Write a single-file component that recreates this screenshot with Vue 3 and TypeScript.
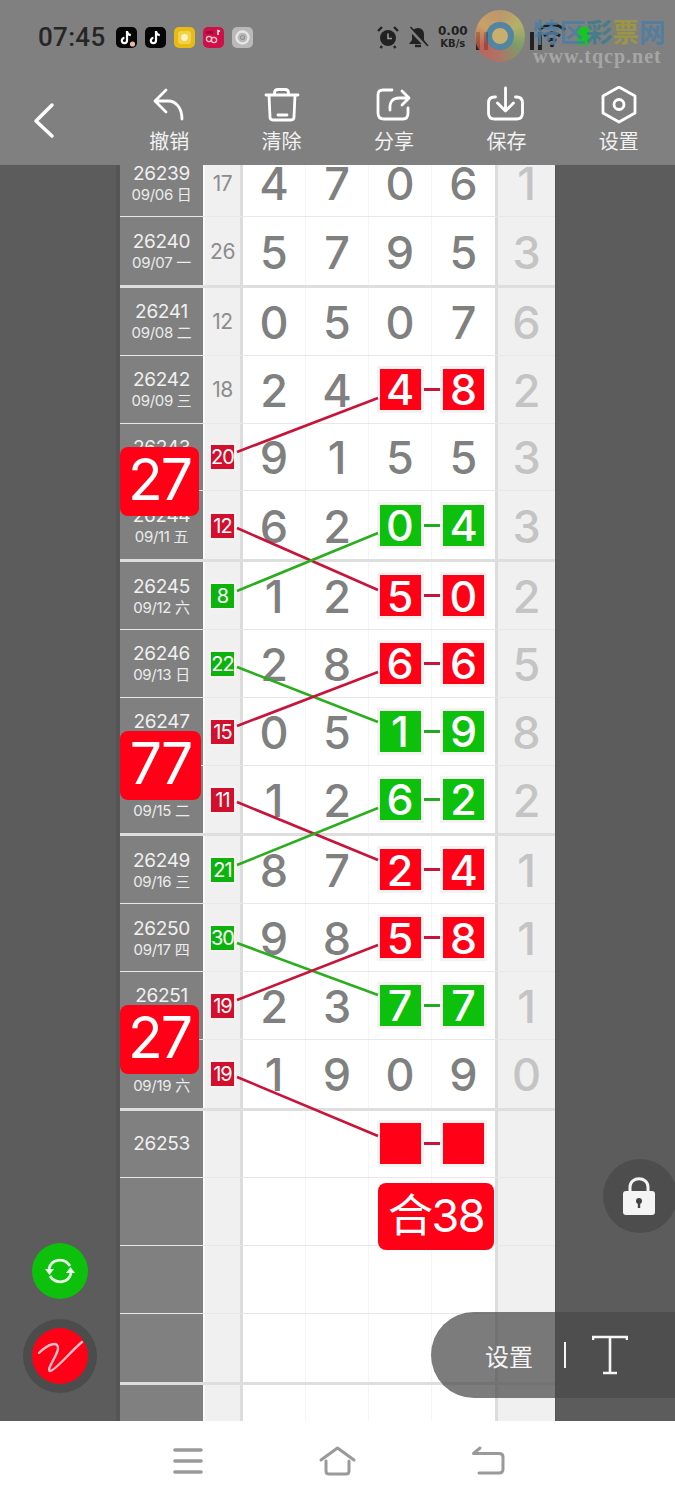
<script setup lang="ts">
type Mark = '' | 'r' | 'g'
interface Row {
  id: string
  date: string
  sum: string
  sumMark: Mark
  nums: string[]
  mark: Mark
  last: string
  end: boolean
}

const raw: [string, string, string, Mark, string, Mark, string][] = [
  ['26239', '09/06 日', '17', '', '4706', '', '1'],
  ['26240', '09/07 一', '26', '', '5795', '', '3'],
  ['26241', '09/08 二', '12', '', '0507', '', '6'],
  ['26242', '09/09 三', '18', '', '2448', 'r', '2'],
  ['26243', '09/10 四', '20', 'r', '9155', '', '3'],
  ['26244', '09/11 五', '12', 'r', '6204', 'g', '3'],
  ['26245', '09/12 六', '8', 'g', '1250', 'r', '2'],
  ['26246', '09/13 日', '22', 'g', '2866', 'r', '5'],
  ['26247', '09/14 一', '15', 'r', '0519', 'g', '8'],
  ['26248', '09/15 二', '11', 'r', '1262', 'g', '2'],
  ['26249', '09/16 三', '21', 'g', '8724', 'r', '1'],
  ['26250', '09/17 四', '30', 'g', '9858', 'r', '1'],
  ['26251', '09/18 五', '19', 'r', '2377', 'g', '1'],
  ['26252', '09/19 六', '19', 'r', '1909', '', '0'],
  ['26253', '', '', '', '    ', 'r', ''],
  ['', '', '', '', '    ', '', ''],
  ['', '', '', '', '    ', '', ''],
  ['', '', '', '', '    ', '', ''],
  ['', '', '', '', '    ', '', ''],
]

const rows: Row[] = raw.map((r, i) => ({
  id: r[0],
  date: r[1],
  sum: r[2],
  sumMark: r[3],
  nums: r[4].split('').map((c) => c.trim()),
  mark: r[5],
  last: r[6],
  end: i % 4 === 1,
}))

const tools = ['撤销', '清除', '分享', '保存', '设置']

const links = [
  { c: 'lr', d: 'M237 452 L378 398' },
  { c: 'lr', d: 'M237 528 L378 590' },
  { c: 'lg', d: 'M237 591 L378 533' },
  { c: 'lg', d: 'M237 667 L378 722' },
  { c: 'lr', d: 'M237 726 L378 672' },
  { c: 'lr', d: 'M237 802 L378 860' },
  { c: 'lg', d: 'M237 865 L378 808' },
  { c: 'lg', d: 'M237 943 L378 995' },
  { c: 'lr', d: 'M237 1000 L378 945' },
  { c: 'lr', d: 'M237 1077 L378 1136' },
]
</script>

<template>
  <div class="phone">
    <header class="top">
      <div class="status">
        <span class="time">07:45</span>
        <div class="apps">
          <svg class="app" viewBox="0 0 21 21"><rect width="21" height="21" rx="5" fill="#060606" /><path d="M11 4v9.500a2.600 2.600 0 1 1-2.600-2.600M11 4.500c.4 2.200 1.800 3.400 3.800 3.600" fill="none" stroke="#fff" stroke-width="2.200" /><circle cx="16.500" cy="17" r="2.600" fill="#e9b9a0" /></svg>
          <svg class="app" viewBox="0 0 21 21"><rect width="21" height="21" rx="5" fill="#060606" /><path d="M11 4v9.500a2.600 2.600 0 1 1-2.600-2.600M11 4.500c.4 2.200 1.800 3.400 3.800 3.600" fill="none" stroke="#fff" stroke-width="2.200" /></svg>
          <svg class="app" viewBox="0 0 21 21"><rect width="21" height="21" rx="5" fill="#e8bb12" /><rect x="4" y="4" width="13" height="13" rx="3" fill="#f2d24a" /><circle cx="10.500" cy="10.500" r="3.400" fill="#fdf3c0" /></svg>
          <svg class="app" viewBox="0 0 21 21"><rect width="21" height="21" rx="5" fill="#cf0f47" /><circle cx="6" cy="12" r="2.600" fill="none" stroke="#f4c6d2" stroke-width="1.300" /><circle cx="11" cy="13" r="2.600" fill="none" stroke="#f4c6d2" stroke-width="1.300" /><path d="M15 8V3.500l2 .8" fill="none" stroke="#fff" stroke-width="1.400" /><path d="M3 4h7v3H3z" fill="#9c0c38" /></svg>
          <svg class="app" viewBox="0 0 21 21"><rect width="21" height="21" rx="5" fill="#b9b9b9" /><circle cx="10.500" cy="10.500" r="6" fill="none" stroke="#e6e6e6" stroke-width="2.400" /><circle cx="10.500" cy="10.500" r="2" fill="none" stroke="#8f8f8f" stroke-width="1.200" /></svg>
        </div>
        <div class="sys">
          <svg class="alarm" viewBox="0 0 22 24"><circle cx="11" cy="13" r="8" fill="#222" /><path d="M11 8.500V13.500H15" fill="none" stroke="#999" stroke-width="1.600" /><path d="M1 6 5 2M21 6 17 2M5 21 3.500 23M17 21 18.500 23" stroke="#222" stroke-width="2.400" /></svg>
          <svg class="bell" viewBox="0 0 22 24"><path d="M11 3c-4 0-6 3-6 6.500V15l-3 4h18l-3-4V9.500C17 6 15 3 11 3z" fill="#222" /><path d="M8 21h6" stroke="#222" stroke-width="2.400" /><path d="M2 3 20 22" stroke="#808080" stroke-width="3.500" /><path d="M3.500 2 21 21" stroke="#222" stroke-width="1.600" /></svg>
          <div class="speed"><b>0.00</b><small>KB/s</small></div>
        </div>
        <div class="marks">
          <div class="bars"><i></i><i></i><i></i><i></i></div>
          <svg class="wifi" viewBox="0 0 30 28"><path d="M2 9c8-7 18-7 26 0M7 15c5-4 11-4 16 0M11 20c2.500-2 5.500-2 8 0" fill="none" stroke="#1f1f1f" stroke-width="3" /><circle cx="15" cy="24" r="2.200" fill="#1f1f1f" /></svg>
          <div class="logo"><div class="logo-in"></div></div>
          <div class="batt"></div>
          <div class="wm">
            <div class="wm-cn">特区<span class="wm-a">彩</span><span class="wm-b">票</span>网</div>
            <div class="wm-url">www.tqcp.net</div>
          </div>
        </div>
      </div>
      <nav class="tools">
        <div class="back">
          <svg width="40" height="44" viewBox="0 0 40 44"><path d="M27 5 11 21 27 36" fill="none" stroke="#fff" stroke-width="3.500" stroke-linecap="round" stroke-linejoin="round" /></svg>
        </div>
        <div v-for="(t, i) in tools" :key="t" class="tool">
          <svg class="ticon" viewBox="0 0 40 40">
            <g v-if="i === 0"><path d="M17 4 6 15 17 26M6 15H19C27 15 33 22 33 33" /></g>
            <g v-else-if="i === 1"><path d="M4 9H36M12.500 9V7Q12.500 3.500 16 3.500H23Q26.500 3.500 26.500 7V9M7 9 8 31Q8 34 11 34H29Q32 34 32 31L33 9M16 29H25" /></g>
            <g v-else-if="i === 2"><path d="M18 4H9Q4 4 4 9V27Q4 33 10 33H29Q34 33 34 27V22M28 5 35 12 28 19M35 12H25Q15 12 16 24" /></g>
            <g v-else-if="i === 3"><path d="M9.500 11H8.500Q2.500 11 2.500 17V27Q2.500 33 8.500 33H30.500Q36.500 33 36.500 27V17Q36.500 11 30.500 11H29.500M19.500 2V24M11.500 17 19.500 25 27.500 17" /></g>
            <g v-else><path d="M20 1 36 10V27L20 36 4 27V10Z" /><circle cx="20" cy="18.500" r="5" /></g>
          </svg>
          <span class="tlabel">{{ t }}</span>
        </div>
      </nav>
    </header>

    <main class="body">
      <div class="table">
        <div v-for="(r, i) in rows" :key="i" class="row" :class="{ end: r.end }">
          <div class="date">
            <span v-if="r.id" class="id">{{ r.id }}</span>
            <span v-if="r.date" class="day">{{ r.date }}</span>
          </div>
          <div class="sum">
            <span v-if="r.sumMark" class="chip" :class="r.sumMark">{{ r.sum }}</span>
            <span v-else>{{ r.sum }}</span>
          </div>
          <div class="nums">
            <div v-for="(n, j) in r.nums" :key="j" class="num">
              <span v-if="r.mark && j > 1" class="sq" :class="[r.mark, { first: j === 2 }]">{{ n }}</span>
              <span v-else>{{ n }}</span>
            </div>
          </div>
          <div class="last">{{ r.last }}</div>
        </div>
      </div>

      <svg class="links" viewBox="0 165 675 1256">
        <path v-for="(l, i) in links" :key="i" :d="l.d" :class="l.c" />
      </svg>

      <div class="big b1">27</div>
      <div class="big b2">77</div>
      <div class="big b3">27</div>
      <div class="total">合38</div>

      <div class="fab sync">
        <svg width="34" height="34" viewBox="0 0 34 34"><path d="M6 15C8 5 21 3 27 12M28 19C26 29 13 31 7 22" fill="none" stroke="#e6ffe6" stroke-width="2.800" /><path d="M2 15H11L6.500 21ZM32 19H23L27.500 13Z" fill="#e6ffe6" /></svg>
      </div>
      <div class="ring">
        <div class="fab sign">
          <svg width="56" height="56" viewBox="-28 -28 56 56"><path d="M-21 -3C-11 -13-1 -15-2 -7-3 0-14 14-10 15-5 15 10 -4 22 -14" fill="none" stroke="#f8bcc6" stroke-width="2.400" stroke-linecap="round" /></svg>
        </div>
      </div>
      <div class="lock">
        <svg width="36" height="44" viewBox="0 0 36 44"><path d="M9 18V13C9 2 27 2 27 13V18" fill="none" stroke="#f4f4f4" stroke-width="3" /><rect x="2" y="17" width="32" height="24" rx="3" fill="#f4f4f4" /><circle cx="18" cy="27" r="3" fill="#444" /><rect x="16.800" y="27" width="2.400" height="7" fill="#444" /></svg>
      </div>
      <div class="pill">
        <span class="pill-t">设置</span>
        <i class="pill-d"></i>
        <svg class="pill-i" width="36" height="40" viewBox="0 0 36 40"><path d="M1 5V2H35V5M18 2V38M11 38H25" fill="none" stroke="#f6f6f6" stroke-width="2.600" /></svg>
      </div>
    </main>

    <footer class="navbar">
      <div class="nb">
        <svg width="40" height="40" viewBox="0 0 40 40"><path d="M7 9H33M7 20H33M7 31H33" stroke="#9a9a9a" stroke-width="3.600" stroke-linecap="round" /></svg>
      </div>
      <div class="nb">
        <svg width="40" height="40" viewBox="0 0 40 40"><path d="M3 19 19.500 7 36 19M8 20V30Q8 33 11 33H28Q31 33 31 30V20" fill="none" stroke="#9a9a9a" stroke-width="3" stroke-linecap="round" stroke-linejoin="round" /></svg>
      </div>
      <div class="nb">
        <svg width="40" height="40" viewBox="0 0 40 40"><path d="M12 7 5.500 12.500H31Q35 12.500 35 16V28Q35 32 31 32H11" fill="none" stroke="#9a9a9a" stroke-width="3" stroke-linecap="round" stroke-linejoin="round" /></svg>
      </div>
    </footer>
  </div>
</template>

<style>
html,
body {
  margin: 0;
  background: #fff;
}
</style>

<style scoped>
.phone {
  width: 675px;
  height: 1500px;
  display: flex;
  flex-direction: column;
  overflow: hidden;
  font-family: Inter, "Noto Sans CJK SC", sans-serif;
}
.top {
  height: 165px;
  flex: none;
  background: #808080;
  position: relative;
  z-index: 2;
}
.status {
  height: 76px;
  display: flex;
  align-items: flex-start;
  padding: 24px 0 0 38px;
  box-sizing: border-box;
  position: relative;
}
.time {
  font-family: Roboto, sans-serif;
  font-size: 26px;
  line-height: 27px;
  font-weight: 500;
  color: #262626;
  letter-spacing: 0.3px;
  width: 78px;
}
.apps {
  display: flex;
  gap: 8px;
  padding-top: 3px;
}
.app {
  width: 21px;
  height: 21px;
}
.sys {
  display: flex;
  align-items: center;
  gap: 8px;
  position: absolute;
  left: 377px;
  top: 25px;
}
.alarm,
.bell {
  width: 22px;
  height: 24px;
}
.speed {
  display: flex;
  flex-direction: column;
  align-items: center;
  color: #222;
  font-family: "DejaVu Sans", sans-serif;
  line-height: 11px;
  margin-left: 1px;
}
.speed b {
  font-size: 12px;
  font-weight: 700;
  line-height: 13px;
}
.speed small {
  font-size: 10px;
  font-weight: 700;
}
.marks {
  position: absolute;
  inset: 0;
}
.bars {
  position: absolute;
  left: 476px;
  top: 30px;
  display: flex;
  align-items: flex-end;
  gap: 4px;
  height: 20px;
}
.bars i {
  width: 4px;
  background: #222;
  height: 18px;
}
.bars i:nth-child(3) {
  margin-left: 38px;
}
.wifi {
  position: absolute;
  left: 537px;
  top: 21px;
  width: 30px;
  height: 28px;
}
.logo {
  position: absolute;
  left: 475px;
  top: 10px;
  width: 50px;
  height: 52px;
  border-radius: 50%;
  background: conic-gradient(#d9a066, #c8c860, #79a860, #c4705c, #d8574a, #e7b05c, #d9a066);
  opacity: 0.7;
}
.logo-in {
  position: absolute;
  left: 11px;
  top: 12px;
  width: 28px;
  height: 28px;
  border-radius: 50%;
  border: 6px solid #3f86b3;
  box-sizing: border-box;
  background: #e7c268;
}
.wm {
  position: absolute;
  left: 533px;
  top: 15px;
  width: 134px;
}
.wm-cn {
  font-family: "Noto Sans CJK SC", sans-serif;
  font-size: 26.500px;
  line-height: 32px;
  font-weight: 700;
  color: #4d7ea6;
  white-space: nowrap;
  opacity: 0.85;
}
.wm-a {
  color: #3e7d8c;
}
.wm-b {
  color: #a09a3e;
}
.wm-url {
  font-family: "Liberation Serif", serif;
  font-size: 20px;
  line-height: 19px;
  font-weight: 700;
  color: #a6a6a6;
  letter-spacing: 1px;
  white-space: nowrap;
}
.batt {
  position: absolute;
  left: 577px;
  top: 27px;
  width: 12px;
  height: 18px;
  background: #16c722;
  border-radius: 2px;
}
.tools {
  display: flex;
  height: 89px;
  padding-top: 10px;
  box-sizing: border-box;
}
.back {
  width: 113px;
  flex: none;
  padding: 14px 0 0 25px;
  box-sizing: border-box;
}
.tool {
  flex: 1;
  display: flex;
  flex-direction: column;
  align-items: center;
}
.ticon {
  width: 40px;
  height: 40px;
  fill: none;
  stroke: #fff;
  stroke-width: 2.800;
  stroke-linecap: round;
  stroke-linejoin: round;
}
.tlabel {
  font-size: 20px;
  line-height: 30px;
  color: #f2f2f2;
  font-family: "Noto Sans CJK SC", sans-serif;
}
.body {
  position: relative;
  height: 1256px;
  flex: none;
  overflow: hidden;
  background: #5c5c5c;
}
.table {
  margin: -15.600px 120px 0;
  width: 435px;
  box-shadow: -4px 0 0 #555, 1px 0 0 #555;
}
.row {
  display: grid;
  grid-template-columns: 83px 40px 252px 60px;
  height: 67.800px;
  box-sizing: border-box;
  border-bottom: 1px solid #e8e8e8;
}
.row.end {
  height: 70.800px;
  border-bottom-width: 3.500px;
  border-bottom-color: #dedede;
}
.date {
  background: #808080;
  display: flex;
  flex-direction: column;
  align-items: center;
  justify-content: center;
  color: #f0f0f0;
}
.id {
  font-size: 19px;
  line-height: 23px;
  letter-spacing: -0.300px;
}
.day {
  font-size: 15px;
  line-height: 19px;
  color: #ececec;
  letter-spacing: -0.300px;
}
.sum {
  background: #f0f0f0;
  border-left: 2px solid #fafafa;
  border-right: 3px solid #dcdcdc;
  box-sizing: border-box;
  display: flex;
  align-items: center;
  justify-content: center;
  font-size: 21px;
  letter-spacing: -0.500px;
  color: #8c8c8c;
  padding-top: 1px;
}
.chip {
  width: 23px;
  height: 24px;
  display: flex;
  align-items: center;
  justify-content: center;
  color: #fff;
  font-size: 20px;
  letter-spacing: -1px;
  box-shadow: 0 0 0 2px #f8f3f3;
}
.chip.r {
  background: #d20f2d;
}
.chip.g {
  background: #0db30d;
}
.nums {
  display: grid;
  grid-template-columns: repeat(4, 63px);
  background: #fff;
}
.num {
  display: flex;
  align-items: center;
  justify-content: center;
  font-size: 45px;
  font-weight: 500;
  color: #808080;
  border-right: 1px solid #f5f5f5;
  padding-top: 2px;
  position: relative;
}
.num:last-child {
  border-right: 0;
}
.sq {
  width: 41px;
  height: 41px;
  display: flex;
  align-items: center;
  justify-content: center;
  color: #fff;
  font-size: 43px;
  font-weight: 500;
  box-shadow: 0 0 0 3px #f6f2f2;
  position: relative;
  margin-top: -2px;
}
.sq.r {
  background: #ff0016;
}
.sq.g {
  background: #0cc00c;
}
.sq.first::after {
  content: "";
  position: absolute;
  left: 44px;
  top: 19px;
  width: 17px;
  height: 3px;
}
.sq.first.r::after {
  background: #c8143a;
}
.sq.first.g::after {
  background: #23a823;
}
.last {
  background: #f0f0f0;
  border-left: 3px solid #dcdcdc;
  box-sizing: border-box;
  display: flex;
  align-items: center;
  justify-content: center;
  font-size: 45px;
  font-weight: 500;
  color: #c4c4c4;
  padding-top: 2px;
}
.links {
  position: absolute;
  inset: 0;
  width: 675px;
  height: 1256px;
  pointer-events: none;
}
.links path {
  stroke-width: 2.600;
  fill: none;
}
.lr {
  stroke: #c8143a;
}
.lg {
  stroke: #2aae1e;
}
.big {
  position: absolute;
  left: 120px;
  width: 79px;
  height: 69px;
  background: #ff0016;
  border-radius: 8px;
  color: #fff;
  font-size: 57px;
  letter-spacing: -2px;
  line-height: 66px;
  text-align: center;
}
.b1 {
  top: 282px;
}
.b2 {
  top: 566px;
  width: 81px;
}
.b3 {
  top: 840px;
}
.total {
  position: absolute;
  left: 378px;
  top: 1018px;
  width: 116px;
  height: 67px;
  background: #ff0016;
  border-radius: 8px;
  color: #fff;
  font-size: 45px;
  letter-spacing: -1.500px;
  line-height: 66px;
  text-align: center;
  white-space: nowrap;
}
.fab {
  border-radius: 50%;
  display: flex;
  align-items: center;
  justify-content: center;
  width: 56px;
  height: 56px;
}
.sync {
  position: absolute;
  left: 32px;
  top: 1078px;
  background: #0cc00c;
}
.ring {
  position: absolute;
  left: 23px;
  top: 1154px;
  width: 74px;
  height: 74px;
  border-radius: 50%;
  background: #4c4c4c;
  display: flex;
  align-items: center;
  justify-content: center;
}
.sign {
  background: #ff0016;
}
.lock {
  position: absolute;
  left: 603px;
  top: 994px;
  width: 74px;
  height: 74px;
  border-radius: 50%;
  background: #4d4d4d;
  display: flex;
  align-items: center;
  justify-content: center;
  box-sizing: border-box;
  padding-right: 2px;
}
.pill {
  position: absolute;
  left: 431px;
  top: 1147px;
  width: 244px;
  height: 86px;
  border-radius: 43px 0 0 43px;
  background: rgba(74, 74, 74, 0.72);
  display: flex;
  align-items: center;
  color: #f4f4f4;
  padding-left: 54px;
  box-sizing: border-box;
}
.pill-t {
  font-size: 24px;
  font-family: "Noto Sans CJK SC", sans-serif;
  width: 79px;
}
.pill-d {
  width: 2px;
  height: 26px;
  background: #f4f4f4;
  flex: none;
}
.pill-i {
  margin-left: 26px;
}
.navbar {
  flex: none;
  height: 79px;
  background: #fff;
  display: flex;
  justify-content: center;
  align-items: center;
}
.nb {
  width: 150px;
  display: flex;
  justify-content: center;
}
</style>
